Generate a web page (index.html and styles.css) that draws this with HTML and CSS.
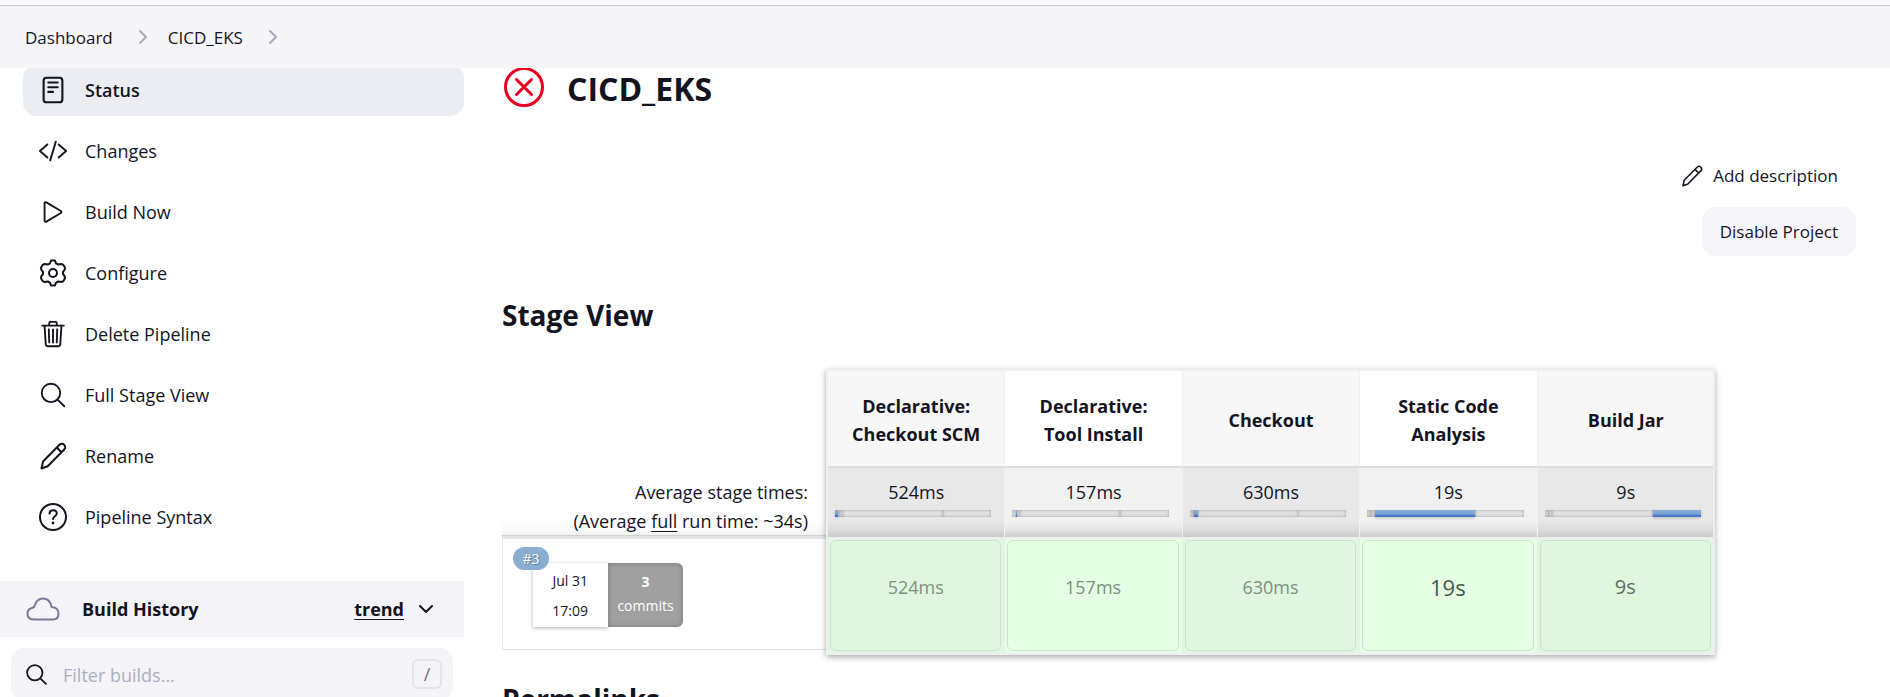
FILE: index.html
```html
<!DOCTYPE html>
<html lang="en">
<head>
<meta charset="utf-8">
<title>CICD_EKS [Jenkins]</title>
<link rel="stylesheet" href="styles.css">
</head>
<body>
<header class="breadcrumb-bar">
  <nav aria-label="Breadcrumb">
    <ol class="breadcrumbs">
      <li><a href="#">Dashboard</a></li>
      <li class="sep"><svg viewBox="0 0 10 16" width="10" height="16"><path d="M2 2l6 6-6 6"/></svg></li>
      <li><a href="#">CICD_EKS</a></li>
      <li class="sep"><svg viewBox="0 0 10 16" width="10" height="16"><path d="M2 2l6 6-6 6"/></svg></li>
    </ol>
  </nav>
</header>
<div class="page">
  <aside class="sidebar">
    <nav class="tasks" aria-label="Tasks">
      <a class="task task-active" href="#">
        <svg class="icon" viewBox="0 0 512 512"><rect x="96" y="48" width="320" height="416" rx="48" stroke-width="36"/><path d="M176 128h160M176 208h160M176 288h80" stroke-width="36"/></svg>
        <span>Status</span></a>
      <a class="task" href="#">
        <svg class="icon" viewBox="0 0 512 512"><path d="M160 368L32 256l128-112M352 368l128-112-128-112M304 96l-96 320"/></svg>
        <span>Changes</span></a>
      <a class="task" href="#">
        <svg class="icon" viewBox="0 0 512 512"><path d="M112 111v290c0 17.440 17 28.520 31 20.160l247.900-148.370c12.120-7.250 12.120-26.330 0-33.580L143 90.840c-14-8.360-31 2.720-31 20.160z"/></svg>
        <span>Build Now</span></a>
      <a class="task" href="#">
        <svg class="icon" viewBox="0 0 28 28"><circle cx="14" cy="14" r="4"/><path d="M11 4.300L12 1.500h4l1 2.800 2.200 1.200 3.200-.5 2 .9 1.500 2.600-.1 2.100L24 12.800v2.400l1.800 2.200.1 2.100-1.500 2.600-2 .9-3.200-.5L17 23.700l-1 2.800h-4l-1-2.800-2.200-1.200-3.200.5-2-.9-1.500-2.600.1-2.100L4 15.200v-2.400l-1.800-2.200-.1-2.100L3.600 5.900l2-.9 3.200.5z"/></svg>
        <span>Configure</span></a>
      <a class="task" href="#">
        <svg class="icon" viewBox="0 0 512 512"><path d="M112 112l20 320c.950 18.490 14.400 32 32 32h184c17.670 0 30.870-13.510 32-32l20-320M72 112h368M192 112V72a23.930 23.930 0 0124-24h80a23.930 23.930 0 0124 24v40M256 176v224M184 176l8 224M328 176l-8 224"/></svg>
        <span>Delete Pipeline</span></a>
      <a class="task" href="#">
        <svg class="icon" viewBox="0 0 512 512"><path d="M221.090 64a157.090 157.090 0 10157.090 157.090A157.100 157.100 0 00221.090 64zM338.290 338.290L448 448"/></svg>
        <span>Full Stage View</span></a>
      <a class="task" href="#">
        <svg class="icon" viewBox="0 0 28 28"><path d="M2.500 26.500l1.500-7L20.500 2.800a3.300 3.300 0 0 1 4.700 4.700L8.700 24.200zM17.800 5.500l4.700 4.700"/></svg>
        <span>Rename</span></a>
      <a class="task" href="#">
        <svg class="icon" viewBox="0 0 28 28"><circle cx="14" cy="14" r="13"/><path d="M10.500 10.500c.3-4.500 7.500-4.200 7.300 0-.1 2.600-3.800 2.900-3.800 5.500"/><circle class="dot" cx="14" cy="20" r="1.400"/></svg>
        <span>Pipeline Syntax</span></a>
    </nav>
    <section class="history">
      <div class="history-head">
        <svg class="cloud" viewBox="0 0 34 24" width="34" height="24"><path d="M8.500 22.500h18.500c3.500 0 5.500-2.400 5.500-6 0-4.200-2.800-6.300-7-6.600C24.500 4.500 21.200 1.500 17 1.500c-4.200 0-7 2.700-8.200 7-.3 1.400-1 2-2.300 2.300C3.300 11.500 1.500 13.800 1.500 16.700c0 3.600 2.500 5.800 7 5.800z"/></svg>
        <h2>Build History</h2>
        <a class="trend" href="#">trend</a>
        <button class="collapse" type="button" aria-label="Collapse"><svg viewBox="0 0 16 10" width="16" height="10"><path d="M2 2l6 6 6-6"/></svg></button>
      </div>
      <div class="filter">
        <svg class="filter-icon" viewBox="0 0 512 512"><path d="M221.090 64a157.090 157.090 0 10157.090 157.090A157.100 157.100 0 00221.090 64zM338.290 338.290L448 448"/></svg>
        <input type="text" placeholder="Filter builds..." aria-label="Filter builds">
        <kbd>/</kbd>
      </div>
    </section>
  </aside>
  <main class="content">
    <div class="title">
      <svg class="failed" viewBox="0 0 40 40" width="40" height="40"><circle cx="20" cy="20" r="18.500"/><path d="M12.500 12.500l15 15M27.500 12.500l-15 15"/></svg>
      <h1>CICD_EKS</h1>
    </div>
    <div class="actions">
      <button class="btn btn-plain" type="button"><svg class="btn-icon" viewBox="0 0 28 28"><path d="M2.500 26.500l1.500-7L20.500 2.800a3.300 3.300 0 0 1 4.700 4.700L8.700 24.200zM17.800 5.500l4.700 4.700"/></svg>Add description</button>
      <button class="btn" type="button">Disable Project</button>
    </div>
    <h2 class="heading">Stage View</h2>
    <div class="stage-view">
      <table class="stages">
        <colgroup><col class="col-run"><col><col><col><col><col></colgroup>
        <thead>
          <tr>
            <td></td>
            <th scope="col">Declarative: Checkout SCM</th>
            <th scope="col">Declarative: Tool Install</th>
            <th scope="col">Checkout</th>
            <th scope="col">Static Code Analysis</th>
            <th scope="col">Build Jar</th>
          </tr>
        </thead>
        <tbody>
          <tr class="totals">
            <td class="totals-label">Average stage times:<br>(Average <u>full</u> run time: ~34s)</td>
            <td class="total">524ms<div class="bar"><i class="s1 on"></i><i class="s2"></i><i class="s3"></i><i class="s4"></i><i class="s5"></i></div></td>
            <td class="total">157ms<div class="bar"><i class="s1"></i><i class="s2 on"></i><i class="s3"></i><i class="s4"></i><i class="s5"></i></div></td>
            <td class="total">630ms<div class="bar"><i class="s1"></i><i class="s2"></i><i class="s3 on"></i><i class="s4"></i><i class="s5"></i></div></td>
            <td class="total">19s<div class="bar"><i class="s1"></i><i class="s2"></i><i class="s3"></i><i class="s4 on"></i><i class="s5"></i></div></td>
            <td class="total">9s<div class="bar"><i class="s1"></i><i class="s2"></i><i class="s3"></i><i class="s4"></i><i class="s5 on"></i></div></td>
          </tr>
          <tr class="run">
            <td class="run-info">
              <div class="run-box">
                <div class="run-card">
                  <a class="badge" href="#">#3</a>
                  <div class="run-date"><span>Jul 31</span><span>17:09</span></div>
                  <div class="run-commits"><b>3</b><span>commits</span></div>
                </div>
              </div>
            </td>
            <td class="stage"><div class="cell">524ms</div></td>
            <td class="stage"><div class="cell">157ms</div></td>
            <td class="stage"><div class="cell">630ms</div></td>
            <td class="stage"><div class="cell cell-long">19s</div></td>
            <td class="stage"><div class="cell cell-mid">9s</div></td>
          </tr>
        </tbody>
      </table>
    </div>
    <h2 class="heading permalinks">Permalinks</h2>
  </main>
</div>
</body>
</html>
```

FILE: styles.css
```css
* { box-sizing: border-box; }

body {
  margin: 0;
  height: 100vh;
  overflow: hidden;
  background: #fff;
  color: #14141f;
  font: 18px/28px "Open Sans", "Noto Sans", sans-serif;
}

a { color: inherit; text-decoration: none; }
h1, h2 { margin: 0; font-weight: 700; }
button { font: inherit; color: inherit; border: 0; background: none; cursor: pointer; }
svg {
  flex: none;
  fill: none;
  stroke: currentColor;
  stroke-width: 2;
  stroke-linecap: round;
  stroke-linejoin: round;
}

.breadcrumb-bar {
  position: relative;
  z-index: 1;
  height: 68px;
  border-top: 5px solid #f9f9fb;
  background: #f5f5f8;
}
.breadcrumb-bar nav { border-top: 1px solid #c9c9cf; }
.breadcrumbs {
  display: flex;
  align-items: center;
  height: 62px;
  margin: 0;
  padding: 2px 25px 0;
  list-style: none;
  font-size: 17px;
}
.sep { display: flex; margin: 0 20px 3px 25px; color: #a9a9bd; }

.page { display: flex; margin-top: -3px; }

.sidebar { flex: none; width: 464px; }
.tasks {
  display: flex;
  flex-direction: column;
  gap: 9px;
  margin-top: -1px;
  padding-left: 23px;
}
.task {
  display: flex;
  align-items: center;
  gap: 17px;
  height: 52px;
  padding: 0 15px;
  border-radius: 14px;
}
.task-active { background: #ecedf3; font-weight: 600; }
.icon { width: 30px; height: 30px; stroke-width: 32; }
.icon[viewBox="0 0 28 28"] { width: 28px; height: 28px; margin: 0 1px; stroke-width: 2; }
.dot { fill: currentColor; stroke: none; }

.history { margin-top: 38px; }
.history-head {
  display: flex;
  align-items: center;
  height: 56px;
  padding: 0 28px 0 26px;
  background: #f3f3f8;
}
.history-head h2 { flex: 1; margin-left: 22px; font-size: 18px; }
.cloud { color: #7a7a94; }
.trend { font-weight: 700; text-decoration: underline; text-underline-offset: 3px; }
.collapse { display: flex; margin-left: 12px; padding: 2px; }
.filter {
  display: flex;
  align-items: center;
  height: 52px;
  margin: 11px 11px 0;
  padding: 0 11px 0 13px;
  border-radius: 14px;
  background: #f3f3f8;
}
.filter-icon { width: 25px; height: 25px; stroke-width: 36; }
.filter input {
  flex: 1;
  min-width: 0;
  padding: 2px 14px 0;
  border: 0;
  outline: 0;
  background: none;
  font: inherit;
}
.filter input::placeholder { color: #aeaec0; opacity: 1; }
kbd {
  width: 30px;
  height: 30px;
  border: 2px solid #e3e3ee;
  border-radius: 6px;
  color: #6f6f88;
  font: 18px/26px "Open Sans", sans-serif;
  text-align: center;
}

.content { flex: 1; min-width: 0; padding: 0 34px 0 38px; }
.title { display: flex; align-items: center; gap: 23px; height: 44px; padding-left: 2px; }
.title h1 { padding-top: 3px; font-size: 32px; line-height: 44px; }
.failed { color: #e6001f; stroke-width: 3; }

.actions {
  display: flex;
  flex-direction: column;
  align-items: flex-end;
  gap: 7px;
  margin-top: 42px;
}
.btn {
  display: flex;
  align-items: center;
  gap: 10px;
  height: 49px;
  padding: 0 18px;
  border-radius: 14px;
  background: #f6f6fa;
  font-size: 17px;
}
.btn-plain { background: none; }
.btn-icon { width: 22px; height: 22px; }

.heading { margin: 39px 0 34px; font-size: 28px; line-height: 40px; }
.permalinks { margin: 24px 0 0; }

.stage-view { position: relative; width: 1213px; }
/* Frame and drop shadow around the stage columns only */
.stage-view::after {
  content: "";
  position: absolute;
  inset: 0 0 0 324px;
  border: 2px solid #efeff1;
  box-shadow: 0 2px 6px rgba(0, 0, 0, .35);
  pointer-events: none;
}
.stages { width: 100%; table-layout: fixed; border-collapse: separate; border-spacing: 0; }
.stages td, .stages th { padding: 0; }
.col-run { width: 326px; }

.stages th {
  height: 99px;
  padding: 4px 20px 0;
  border-right: 1px solid #efeff1;
  border-bottom: 2px solid #dedede;
}
.stages th:nth-child(even) { background: #f7f7f7; }
.stages th:nth-child(odd) { background: #fff; }

.totals { height: 71px; vertical-align: top; }
.totals .totals-label {
  padding: 10px 20px 0 0;
  border-bottom: 3px solid #e4e4e4;
  background: linear-gradient(#fff 75%, #fafafa 90%, #f0f0f0);
  box-shadow: inset 0 -1px #d0d0d0;
  line-height: 29px;
  text-align: right;
}
.totals u { text-underline-offset: 3px; }
.totals .total {
  padding: 10px 0 0;
  border-right: 1px solid #efeff1;
  border-bottom: 2px solid #efefef;
  background: linear-gradient(#e8e8e8 75%, #dfdfdf 87%, #cbcbcb);
  text-align: center;
}
.totals .total:nth-child(odd) { background: linear-gradient(#f1f1f1 75%, #e9e9e9 87%, #cecece); }
.bar { display: flex; height: 7px; margin: 4px 13px 0 7px; background: #e2e2e2; }
.bar i { box-shadow: inset 0 0 3px rgba(0, 0, 0, .3); }
.bar .on {
  background: linear-gradient(#8aaed6, #78a1d2 60%, #4a78cc 75%);
  box-shadow: 0 1px 3px rgba(0, 0, 0, .2);
}
.s1 { flex: 2; }
.s2 { flex: 1; }
.s3 { flex: 2; }
.s4 { flex: 64; }
.s5 { flex: 31; }

.run { height: 116px; vertical-align: top; }
.run-box {
  height: 111px;
  padding: 24px 0 0 30px;
  border: solid #e6e6e6;
  border-width: 0 0 1px 1px;
}
.run-card { position: relative; display: flex; width: 150px; height: 64px; font-size: 14px; }
.badge {
  position: absolute;
  top: -16px;
  left: -20px;
  width: 36px;
  height: 23px;
  border-radius: 12px;
  background: #8aadd2;
  color: #fff;
  font-size: 14px;
  line-height: 23px;
  text-align: center;
  text-shadow: 1px 1px 1px rgba(0, 0, 0, .3);
}
.run-date, .run-commits { display: flex; flex: none; flex-direction: column; width: 75px; }
.run-date {
  justify-content: center;
  padding: 2px 20px 0 0;
  box-shadow: 0 1px 4px rgba(0, 0, 0, .3);
  line-height: 30px;
  text-align: right;
}
.run-commits {
  justify-content: center;
  padding-bottom: 2px;
  border-radius: 0 6px 6px 0;
  background: #a0a0a0;
  box-shadow: inset 0 0 5px rgba(0, 0, 0, .25);
  color: #fff;
  line-height: 24px;
  text-align: center;
}

.stages .stage { padding: 1px 3px 4px 2px; border-right: 1px solid #e9eee9; background: #dff7df; }
.stages .stage:nth-child(odd) { background: #e4ffe4; }
.cell {
  height: 111px;
  border: 1px solid #d5dcd5;
  border-radius: 6px;
  color: #7f8f80;
  line-height: 92px;
  text-align: center;
}
.cell-long { color: #4c554c; font-size: 22px; }
.cell-mid { color: #626e63; font-size: 20px; }
```
